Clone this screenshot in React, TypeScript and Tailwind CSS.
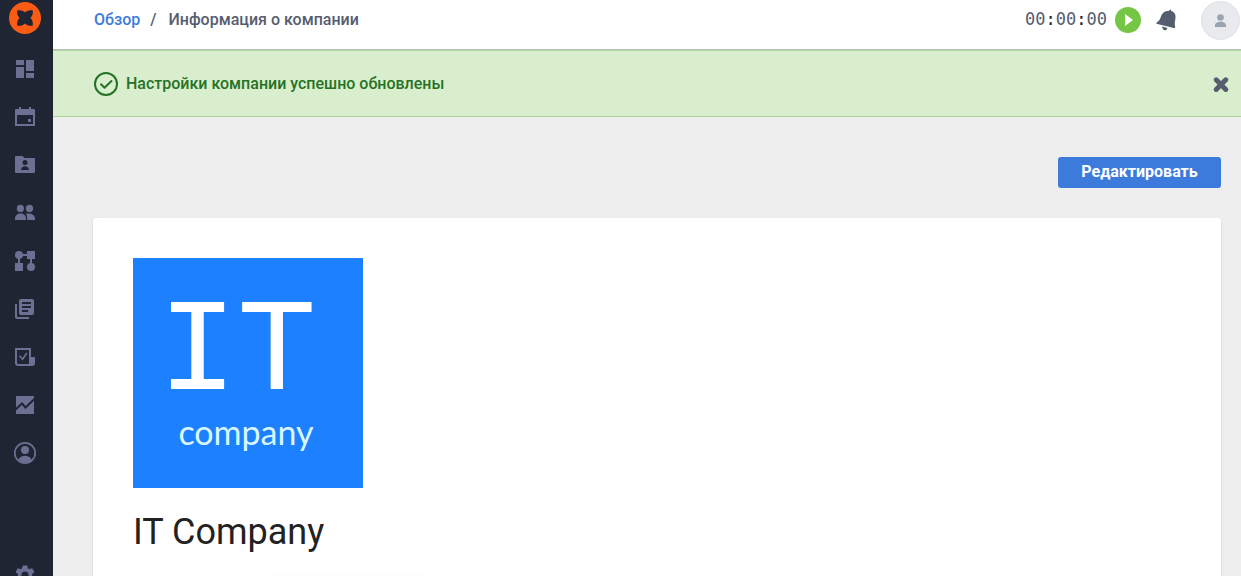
import type { ReactNode } from 'react';

type NavItem = { label: string; icon: ReactNode };

function Icon({ children }: { children: ReactNode }) {
  return (
    <svg viewBox="0 0 24 24" className="size-6" fill="currentColor" aria-hidden="true">
      {children}
    </svg>
  );
}

const navItems: NavItem[] = [
  {
    label: 'Обзор',
    icon: (
      <Icon>
        <path d="M3 3h8v5H3zM3 10h8v11H3zM13 3h8v11h-8zM13 16h8v5h-8z" />
      </Icon>
    ),
  },
  {
    label: 'Календарь',
    icon: (
      <Icon>
        <path
          fillRule="evenodd"
          d="M6 2h2v2h8V2h2v2h3a1 1 0 0 1 1 1v16H2V5a1 1 0 0 1 1-1h3zM4 10v9h16v-9zM15 14h3v3h-3z"
        />
      </Icon>
    ),
  },
  {
    label: 'Контакты',
    icon: (
      <Icon>
        <path d="M3 3h6.500l2 2H21a1 1 0 0 1 1 1v13a1 1 0 0 1-1 1H3a1 1 0 0 1-1-1V4a1 1 0 0 1 1-1z" />
        <circle cx="12" cy="9.500" r="2.500" fill="#1f2532" />
        <path d="M8 17c0-2.400 2-3.800 4-3.800s4 1.400 4 3.800z" fill="#1f2532" />
      </Icon>
    ),
  },
  {
    label: 'Команда',
    icon: (
      <Icon>
        <circle cx="7.400" cy="7.400" r="3.600" />
        <circle cx="16.500" cy="7.400" r="3.600" />
        <path d="M2 19v-1.500C2 14.500 4.500 12.500 7.500 12.500S13 14.500 13 17.500V19z" />
        <path d="M13 12.700c4-1 9 .8 9 4.800V19h-7.800v-1.500c0-2-.4-3.600-1.200-4.800z" />
      </Icon>
    ),
  },
  {
    label: 'Процессы',
    icon: (
      <Icon>
        <circle cx="6" cy="6" r="4" />
        <circle cx="18" cy="18" r="4" />
        <path d="M14 2h8v8h-8zM2 14h8v8H2zM5 9h2v6H5zM9 5h6v2H9zM17 9h2v6h-2z" />
      </Icon>
    ),
  },
  {
    label: 'Документы',
    icon: (
      <Icon>
        <path
          fillRule="evenodd"
          d="M8 2h11a2 2 0 0 1 2 2v12a2 2 0 0 1-2 2H8a2 2 0 0 1-2-2V4a2 2 0 0 1 2-2zM9 5v2h9V5zM9 9v2h9V9zM9 13v2h6v-2z"
        />
        <path d="M2 7h2v13h12v2H4a2 2 0 0 1-2-2z" />
      </Icon>
    ),
  },
  {
    label: 'Задачи',
    icon: (
      <Icon>
        <path
          fillRule="evenodd"
          d="M2 3h16v9h4v6a3 3 0 0 1-3 3H5a3 3 0 0 1-3-3zM4 5v12.500A1.500 1.500 0 0 0 5.500 19H16V5z"
        />
        <path d="m6.400 10.800 3.200 3.400 4.200-6.200" fill="none" stroke="currentColor" strokeWidth="1.600" />
      </Icon>
    ),
  },
  {
    label: 'Отчёты',
    icon: (
      <Icon>
        <path d="M3 3h18v18H3z" />
        <path d="m2 17 7-6.500 3.500 4L22 5.500" fill="none" stroke="#1f2532" strokeWidth="2" />
      </Icon>
    ),
  },
  {
    label: 'Профиль',
    icon: (
      <Icon>
        <circle cx="12" cy="12" r="10.200" fill="none" stroke="currentColor" strokeWidth="1.700" />
        <circle cx="12" cy="9" r="4" />
        <path d="M5.400 18.400C7 16 9.300 14.800 12 14.800s5 1.200 6.600 3.600C17 20.500 14.500 21.500 12 21.500s-5-1-6.600-3.100z" />
      </Icon>
    ),
  },
];

function Sidebar() {
  return (
    <aside className="flex w-[53px] shrink-0 flex-col overflow-hidden bg-[#1f2532] pr-[3px] text-[#6d7092]">
      <a href="#home" aria-label="Главная" className="flex h-[45px] shrink-0 justify-center pt-0.5">
        <svg viewBox="0 0 32 32" className="size-8" aria-hidden="true">
          <circle cx="16" cy="16" r="16" fill="#fc5b14" />
          <path
            d="M8.300 8.300c3.200-.5 5.700.2 7.700 2.200 2-2 4.500-2.700 7.700-2.200.5 3.200-.2 5.700-2.200 7.700 2 2 2.700 4.500 2.200 7.700-3.200.5-5.700-.2-7.700-2.200-2 2-4.500 2.700-7.700 2.200-.5-3.200.2-5.700 2.200-7.700-2-2-2.700-4.500-2.200-7.700z"
            fill="#1f2532"
          />
        </svg>
      </a>
      <nav className="flex shrink-0 flex-col">
        {navItems.map((item) => (
          <a key={item.label} href="#section" aria-label={item.label} className="flex h-12 items-center justify-center">
            {item.icon}
          </a>
        ))}
      </nav>
      <a href="#settings" aria-label="Настройки" className="mt-[74px] flex h-12 shrink-0 items-center justify-center">
        <Icon>
          <path d="M19.140 12.940c.04-.3.060-.61.060-.94 0-.32-.02-.64-.07-.94l2.030-1.580a.49.49 0 0 0 .12-.61l-1.920-3.320a.488.488 0 0 0-.59-.22l-2.390.96c-.5-.38-1.030-.7-1.620-.94l-.36-2.540a.484.484 0 0 0-.48-.41h-3.840c-.24 0-.43.17-.47.41l-.36 2.540c-.59.24-1.130.57-1.620.94l-2.390-.96c-.22-.08-.47 0-.59.22L2.740 8.870c-.12.21-.08.47.12.61l2.030 1.580c-.05.3-.09.63-.09.94s.02.64.07.94l-2.030 1.580a.49.49 0 0 0-.12.61l1.920 3.320c.12.22.37.29.59.22l2.390-.96c.5.38 1.030.7 1.620.94l.36 2.540c.05.24.24.41.48.41h3.840c.24 0 .44-.17.47-.41l.36-2.540c.59-.24 1.130-.56 1.620-.94l2.390.96c.22.08.47 0 .59-.22l1.920-3.320c.12-.22.07-.47-.12-.61zM12 15.600A3.600 3.600 0 1 1 12 8.400a3.600 3.600 0 0 1 0 7.200z" />
        </Icon>
      </a>
    </aside>
  );
}

function TopBar() {
  return (
    <header className="flex h-[50px] items-center justify-between border-b border-[#babfba] bg-white pb-[9px] pl-[41px]">
      <nav aria-label="Навигация" className="flex items-center font-medium">
        <a href="#overview" className="text-[#3c7bdc]">
          Обзор
        </a>
        <span className="pl-2.5 pr-3 text-[#555d6f]">/</span>
        <span className="text-[#555d6f]">Информация о компании</span>
      </nav>
      <div className="flex items-center">
        <span className="font-['DejaVu_Sans_Mono',monospace] text-[17px] text-[#555d6f]">
          00<span className="text-[#222]">:</span>00<span className="text-[#222]">:</span>00
        </span>
        <button type="button" aria-label="Запустить таймер" className="ml-2 size-[26px] rounded-full bg-[#76c645]">
          <svg viewBox="0 0 26 26" className="size-[26px]" fill="#fff" aria-hidden="true">
            <path d="M10 7v12l8-6z" />
          </svg>
        </button>
        <button type="button" aria-label="Уведомления" className="ml-3.5 text-[#555d6f]">
          <svg viewBox="0 0 24 24" className="size-6" fill="currentColor" aria-hidden="true">
            <path d="M13.700 3 15.600 1.200l.8 1.900c3.200 1 4.600 4 4 7.500l-.6 4.200c-.2 1.500 0 2.300.4 3.700l-.3 1.800L1.300 15.800l.4-1.400c2-1.200 3-2.400 3.700-4.400l.9-2.500c1.300-3.200 4-4.900 7.400-4.500zM7.200 18.600l5.200 1.300c-.5 1.900-1.700 2.600-3 2.300-1.300-.4-2.200-1.600-2.200-3.600z" />
          </svg>
        </button>
        <button type="button" aria-label="Профиль пользователя" className="ml-[22px] mr-px size-[39px] rounded-full border border-[#dfe1e6] bg-[#e8eaee]">
          <svg viewBox="0 0 37 37" className="size-[37px]" fill="#9aa3b2" aria-hidden="true">
            <circle cx="18.500" cy="15.500" r="3.300" />
            <path d="M13 25v-1.500c0-2.500 2.500-3.700 5.500-3.700s5.500 1.200 5.500 3.700V25z" />
          </svg>
        </button>
      </div>
    </header>
  );
}

function SuccessAlert() {
  return (
    <div role="status" className="flex h-[67px] items-center border-y border-[#aed69c] bg-[#d9eecd] pl-10 pr-[11px] text-[#257225]">
      <svg viewBox="0 0 26 26" className="size-[26px]" fill="none" stroke="currentColor" strokeWidth="2" aria-hidden="true">
        <circle cx="13" cy="13" r="11" />
        <path d="m8 13.300 3.500 3.500L18.500 10" strokeLinecap="round" strokeLinejoin="round" />
      </svg>
      <p className="ml-[7px] font-medium">Настройки компании успешно обновлены</p>
      <button type="button" aria-label="Закрыть" className="ml-auto text-[#555d6f]">
        <svg viewBox="0 0 18 18" className="size-[18px]" stroke="currentColor" strokeWidth="5" strokeLinecap="round" aria-hidden="true">
          <path d="m4.200 4.800 9.600 9.600M13.800 4.800l-9.600 9.600" />
        </svg>
      </button>
    </div>
  );
}

function CompanyLogo() {
  return (
    <svg viewBox="0 0 230 230" className="size-[230px] bg-[#1d80ff]" role="img" aria-label="IT company">
      <text x="25" y="131" fontSize="132" fill="#fff" fontFamily="Liberation Mono, monospace">
        IT
      </text>
      <text x="113" y="187" fontSize="34" textAnchor="middle" fill="#d9f7ff" fontFamily="Lato, sans-serif">
        company
      </text>
    </svg>
  );
}

export default function App() {
  return (
    <div className="flex h-screen overflow-hidden bg-[#eee] font-['Roboto',sans-serif] text-base">
      <Sidebar />
      <div className="min-w-0 flex-1">
        <TopBar />
        <SuccessAlert />
        <main className="flex flex-col items-end pl-10 pr-5 pt-10">
          <button type="button" className="h-[31px] w-[163px] rounded-[3px] bg-[#3c7bdc] pb-0.5 font-bold text-white">
            Редактировать
          </button>
          <section className="mt-[30px] w-full rounded-[3px] bg-white px-10 pb-20 pt-10 shadow-sm">
            <CompanyLogo />
            <h1 className="mt-5 text-4xl leading-12 text-[#222]">IT Company</h1>
            <div className="ml-[132px] mt-5 h-20 w-40 rounded-sm bg-white shadow-sm" />
          </section>
        </main>
      </div>
    </div>
  );
}
